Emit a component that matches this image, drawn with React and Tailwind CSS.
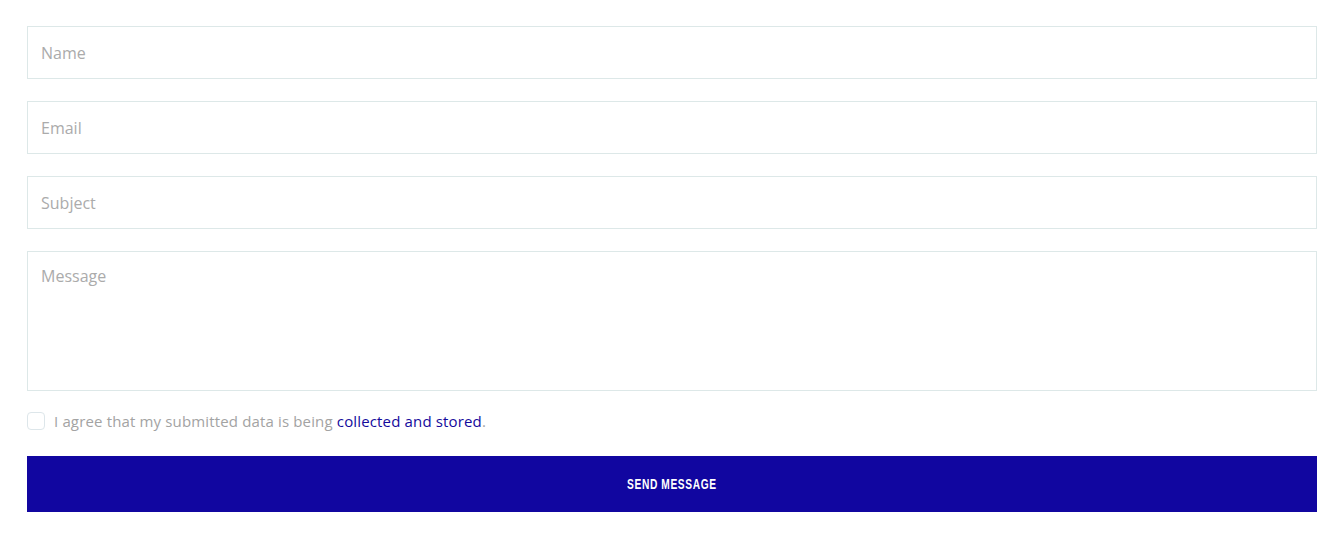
import React from 'react'

const fieldCls =
  "w-full h-[53px] border border-[#dde8e8] bg-white px-[13px] text-[16px] text-[#555] placeholder:text-[#ababab] outline-none"

export default function App() {
  return (
    <div className="bg-white min-h-[538px] px-[27px] pt-[26px] pr-[26px]" style={{ fontFamily: '"Open Sans", "Liberation Sans", sans-serif' }}>
      <form className="flex flex-col" onSubmit={(e) => e.preventDefault()}>
        <input type="text" placeholder="Name" className={fieldCls} />
        <input type="email" placeholder="Email" className={fieldCls + " mt-[22px]"} />
        <input type="text" placeholder="Subject" className={fieldCls + " mt-[22px]"} />
        <textarea
          placeholder="Message"
          className="mt-[22px] w-full h-[140px] resize-none border border-[#dde8e8] bg-white px-[13px] pt-[12px] text-[16px] text-[#555] placeholder:text-[#ababab] outline-none"
        />

        {/* Consent */}
        <label className="mt-[19px] flex items-center gap-[9px] text-[15px] tracking-[0.01em] text-[#a3a3a3]">
          <span className="w-[18px] h-[18px] rounded-[4px] border border-[#dde6ea] bg-white shrink-0" />
          <span>
            I agree that my submitted data is being{' '}
            <a href="#" className="text-[#140a9c]">collected and stored</a>.
          </span>
        </label>

        <button
          type="submit"
          className="mt-[23px] w-full h-[56px] bg-[#1106a0] text-white uppercase"
          style={{ fontFamily: '"Liberation Sans", sans-serif' }}
        >
          <span className="inline-block text-[15px] font-bold tracking-[0.06em] scale-x-[0.68]">Send Message</span>
        </button>
      </form>
    </div>
  )
}
